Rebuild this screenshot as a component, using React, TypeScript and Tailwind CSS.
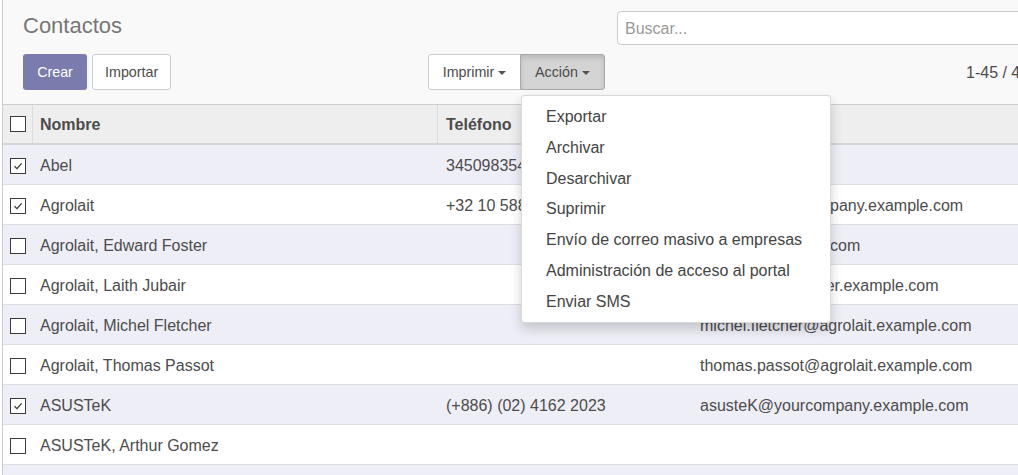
import { ReactNode } from "react";

interface Contact {
  name: string;
  phone?: string;
  email?: string;
  checked?: boolean;
}

const contacts: Contact[] = [
  { name: "Abel", phone: "345098354", checked: true },
  { name: "Agrolait", phone: "+32 10 588 558", email: "agrolait@yourcompany.example.com", checked: true },
  { name: "Agrolait, Edward Foster", email: "efoster@example.com" },
  { name: "Agrolait, Laith Jubair", email: "laith.jubair@partner.example.com" },
  { name: "Agrolait, Michel Fletcher", email: "michel.fletcher@agrolait.example.com" },
  { name: "Agrolait, Thomas Passot", email: "thomas.passot@agrolait.example.com" },
  { name: "ASUSTeK", phone: "(+886) (02) 4162 2023", email: "asusteK@yourcompany.example.com", checked: true },
  { name: "ASUSTeK, Arthur Gomez" },
  { name: "Azure Interior", phone: "+1 870-931-0505", email: "azure.Interior24@example.com" }
];

const actions = [
  "Exportar",
  "Archivar",
  "Desarchivar",
  "Suprimir",
  "Envío de correo masivo a empresas",
  "Administración de acceso al portal",
  "Enviar SMS"
];

const Checkbox = ({ checked }: { checked?: boolean }) => (
  <span className="flex h-[16px] w-[16px] items-center justify-center border border-[#3a3a3a] bg-white">
    {checked && (
      <svg width="12" height="12" viewBox="0 0 12 12" fill="none">
        <path d="M2.5 6.2 L5 8.6 L9.6 3.4" stroke="#333" strokeWidth="1.2" />
      </svg>
    )}
  </span>
);

const Caret = () => (
  <span className="ml-[4px] inline-block h-0 w-0 border-x-[4px] border-t-[4px] border-x-transparent border-t-[#555]" />
);

const Row = ({ children, striped }: { children: ReactNode; striped: boolean }) => (
  <div
    className={`flex h-[40px] items-center border-b border-[#dedede] pt-[2px] text-[16px] text-[#4c4c4c] ${
      striped ? "bg-[#eeeef6]" : "bg-white"
    }`}
  >
    {children}
  </div>
);

export default function App() {
  return (
    <div className="relative h-[475px] w-[1018px] overflow-hidden bg-white font-['Liberation_Sans',Arial,sans-serif]">
      <div className="ml-[2px] h-full w-[1400px] border-l border-[#cccccc]">
        {/* control panel */}
        <div className="h-[105px] border-b border-[#cccccc] bg-[#f9f9f9] pl-[20px]">
          <div className="flex h-[54px]">
            <div className="w-[594px] pt-[13px] text-[22px] leading-[26px] text-[#777777]">Contactos</div>
            <div className="mt-[11px] flex h-[34px] w-[500px] items-center rounded-[4px] border border-[#cccccc] bg-white pl-[7px] pt-[1px] text-[16px] text-[#999999]">
              Buscar...
            </div>
          </div>
          <div className="flex h-[36px]">
            <div className="flex w-[594px] items-center justify-between pr-[12px] text-[14.3px]">
              <div className="flex">
                <button className="h-[36px] w-[64px] rounded-[3px] bg-[#7c7bad] pt-[1px] text-white">Crear</button>
                <button className="ml-[5px] h-[36px] rounded-[3px] border border-[#cccccc] bg-white px-[12px] pt-[1px] text-[#4c4c4c]">
                  Importar
                </button>
              </div>
              <div className="flex">
                <button className="flex h-[36px] w-[93px] items-center justify-center rounded-l-[3px] border border-[#cccccc] bg-white pt-[1px] text-[#4c4c4c]">
                  Imprimir
                  <Caret />
                </button>
                <button className="-ml-px flex h-[36px] w-[85px] items-center justify-center rounded-r-[3px] border border-[#a9a9a9] bg-[#d4d4d4] pt-[1px] text-[#4c4c4c] shadow-[inset_0_3px_5px_rgba(0,0,0,0.125)]">
                  Acción
                  <Caret />
                </button>
              </div>
            </div>
            <div className="flex items-center pl-[349px] pt-[1px] text-[16px] text-[#4c4c4c]">
              <span>1-45 / 45</span>
            </div>
          </div>
        </div>

        {/* list */}
        <div className="flex h-[40px] items-center border-b-2 border-[#d6d6d6] bg-[#eeeeee] text-[16px] font-bold text-[#4c4c4c]">
          <div className="flex h-full w-[30px] items-center border-r border-[#dddddd] pl-[7px]">
            <Checkbox />
          </div>
          <div className="flex h-full w-[405px] items-center border-r border-[#dddddd] pl-[7px] pt-[2px]">Nombre</div>
          <div className="flex h-full w-[254px] items-center border-r border-[#dddddd] pl-[8px] pt-[2px]">Teléfono</div>
          <div className="flex h-full flex-1 items-center pl-[8px] pt-[2px]">Email</div>
        </div>
        {contacts.map((c, i) => (
          <Row key={c.name} striped={i % 2 === 0}>
            <div className="w-[30px] pl-[7px]">
              <Checkbox checked={c.checked} />
            </div>
            <div className="w-[405px] pl-[7px]">{c.name}</div>
            <div className="w-[254px] pl-[8px]">{c.phone}</div>
            <div className="flex-1 pl-[8px]">{c.email}</div>
          </Row>
        ))}
      </div>

      {/* Acción dropdown */}
      <div className="absolute left-[521px] top-[95px] w-[310px] rounded-[4px] border border-black/15 bg-white pb-[4px] pt-[6px] shadow-[0_6px_12px_rgba(0,0,0,0.175)]">
        {actions.map((a) => (
          <div key={a} className="px-[24px] py-[3px] text-[16px] leading-[24.8px] text-[#444444]">
            {a}
          </div>
        ))}
      </div>
    </div>
  );
}
